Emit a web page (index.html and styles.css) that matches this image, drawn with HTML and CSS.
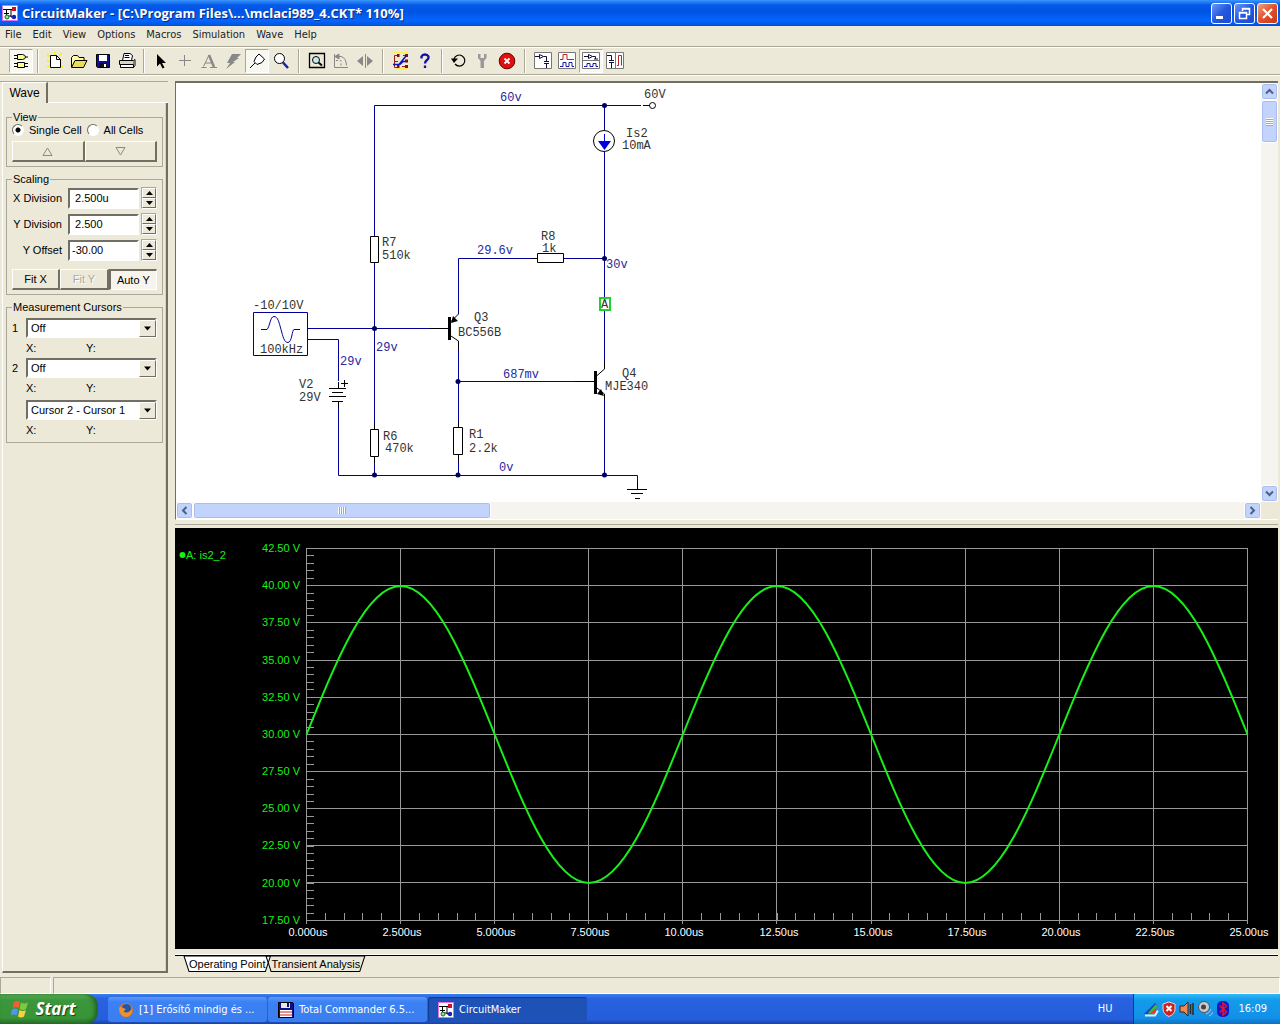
FILE: index.html
```html
<!DOCTYPE html>
<html lang="en">
<head>
<meta charset="utf-8">
<title>CircuitMaker</title>
<link rel="stylesheet" href="styles.css">
</head>
<body>
<svg class="defs" aria-hidden="true">
  <symbol id="app-icon" viewBox="0 0 16 16">
    <rect x=".5" y=".5" width="15" height="15" fill="#fff" stroke="#e070e8"/>
    <path d="M1 4.500h10M4.500 4v7h5M9 4v8h4M2 8.500h5" fill="none" stroke="#000"/>
    <rect x="10" y="2" width="4" height="4" fill="#d01020"/>
    <circle cx="12" cy="12" r="2.200" fill="#1020c0"/>
    <circle cx="5" cy="12" r="2" fill="#9fe0a0" stroke="#087018"/>
  </symbol>
</svg>

<header class="titlebar">
  <svg class="icon16"><use href="#app-icon"/></svg>
  <h1>CircuitMaker - [C:\Program Files\...\mclaci989_4.CKT* 110%]</h1>
  <div class="window-buttons">
    <button class="winbtn" aria-label="Minimize"><svg viewBox="0 0 19 19"><path d="M4 13.500h7" stroke="#fff" stroke-width="3"/></svg></button>
    <button class="winbtn" aria-label="Restore"><svg viewBox="0 0 19 19" fill="none" stroke="#fff"><path d="M7.500 7V4.500h7v6H12M7 5h8" stroke-width="1.500"/><path d="M4.500 8.500h7v6h-7zM4 9h8" stroke-width="1.500"/></svg></button>
    <button class="winbtn close" aria-label="Close"><svg viewBox="0 0 19 19"><path d="M5 5l9 9M14 5l-9 9" stroke="#fff" stroke-width="2.200"/></svg></button>
  </div>
</header>

<nav class="menubar">
  <a href="#">File</a><a href="#">Edit</a><a href="#">View</a><a href="#">Options</a><a href="#">Macros</a><a href="#">Simulation</a><a href="#">Wave</a><a href="#">Help</a>
</nav>

<div class="toolbar">
  <button class="tool pressed" aria-label="Parts browser"><svg viewBox="0 0 18 18" fill="#ffff90" stroke="#000"><path d="M5.500 2.500h5q3 .5 3 2.500t-3 2.500h-5zM2 3.500h3M2 6.500h3M13.500 5H16"/><path d="M5.500 10.500h7v5h-7zM2 11.500h3.500M2 14.500h3.500M12.500 11.500H16M12.500 14.500H16"/></svg></button>
  <span class="sep narrow"></span>
  <button class="tool" aria-label="New"><svg viewBox="0 0 18 18"><path d="M1 2l3 3M9 0v3M16 1l-3 3M1 15l3-2M17 15l-3-2M1 9h3" stroke="#f4f400" stroke-width="1.500"/><path d="M4.500 3.500h6l4 4v8h-10z" fill="#fff" stroke="#000"/><path d="M10.500 3.500v4h4" fill="none" stroke="#000"/></svg></button>
  <button class="tool" aria-label="Open"><svg viewBox="0 0 18 18" fill="#ffffa0" stroke="#000"><path d="M1.500 15V5.500l2-2h4l1.500 2h5v3"/><path d="M1.500 15.500l3.500-7h12l-3.500 7z" fill="#e8dc60"/></svg></button>
  <button class="tool" aria-label="Save"><svg viewBox="0 0 18 18"><path d="M2.500 2.500h13v13h-12l-1-1z" fill="#101090" stroke="#000"/><path d="M5 3h8v6H5z" fill="#fff"/><path d="M5 11h8v4H5z" fill="#111"/><path d="M10 12h2v3h-2z" fill="#fff"/></svg></button>
  <button class="tool" aria-label="Print"><svg viewBox="0 0 18 18" fill="#fff" stroke="#000"><path d="M4.500 8.500l1.500-7h6l2.500 2-1 5z"/><path d="M7 3.500h4M6.500 5.500h5"/><path d="M1.500 8.500h14v4h-14z" fill="#d8d4c0"/><path d="M2.500 12.500h13v3h-13zM15.500 8.500l1.500-1v6l-1.500 2"/></svg></button>
  <span class="sep narrow"></span>
  <button class="tool" aria-label="Select"><svg viewBox="0 0 18 18"><path d="M5 2v12.500l3-3 2.500 5 2-1-2.500-4.500h4z"/></svg></button>
  <button class="tool" aria-label="Wire"><svg viewBox="0 0 18 18"><path d="M3 8.500h12M8.500 3v11" stroke="#888"/></svg></button>
  <button class="tool" aria-label="Text"><svg viewBox="0 0 18 18" fill="none" stroke="#888"><path d="M3.500 14.500L9 3M5 11h6M1.500 15.500h5M10 15.500h7"/><path d="M9 3l5 12" stroke-width="2.500"/></svg></button>
  <button class="tool" aria-label="Delete"><svg viewBox="0 0 18 18"><path d="M8 2h9l-4 4h2L9 10h2l-9 7 4-6H3z" fill="#888"/></svg></button>
  <button class="tool pressed" aria-label="Probe"><svg viewBox="0 0 18 18" fill="#fff" stroke="#000"><path d="M8 5l3-3 5.500 5-2.500 3.500-5 2-3-3z"/><path d="M7 11l-5 5"/></svg></button>
  <button class="tool" aria-label="Zoom"><svg viewBox="0 0 18 18"><circle cx="7.500" cy="6.500" r="5" fill="#fff" stroke="#000"/><path d="M11 10.500l5 5.500" stroke="#1020b0" stroke-width="2.500"/></svg></button>
  <span class="sep"></span>
  <button class="tool" aria-label="Fit to window"><svg viewBox="0 0 18 18" fill="none" stroke="#000"><path d="M1.500 1.500h15v14h-15z" stroke-width="1.300"/><circle cx="8" cy="8" r="3.500" fill="#c0eeee"/><path d="M10.500 10.500l3.500 3" stroke-width="2"/></svg></button>
  <button class="tool" aria-label="Rotate"><svg viewBox="0 0 18 18" fill="none" stroke="#888"><path d="M2.500 2v13.500H16M5 4.500h4q5 1 5.500 9"/><path d="M7 2L3 4.500 7 7z" fill="#888"/><path d="M4 8.500h5v6" stroke-dasharray="2 2"/></svg></button>
  <button class="tool" aria-label="Mirror"><svg viewBox="0 0 18 18"><path d="M7 4v10L1 9zM11 4v10l6-5z" fill="#888"/><path d="M9.500 2v14" stroke="#888"/></svg></button>
  <span class="sep"></span>
  <button class="tool" aria-label="Analog or digital"><svg viewBox="0 0 18 18" fill="none"><path d="M2 .5h14M3 16.500h13" stroke="#ffef50" stroke-width="1.500"/><path d="M6 3.500H2.500v12H6M2.500 9.500H6M11 3.500h2M10 14.500h3" stroke="#a01818"/><path d="M5 2h2.500v3H5zM5 13h2.500v3H5zM13 2h3v3h-3zM13 7.500h3v3h-3zM13 13h3v3h-3z" fill="#801010"/><path d="M1 12.500h6L14 4M8 12.500l3-3h2" stroke="#1010c0" stroke-width="1.500"/></svg></button>
  <button class="tool" aria-label="Help"><svg viewBox="0 0 18 18" fill="none" stroke="#1010a8" stroke-width="2.300"><path d="M5.500 6.500V4.500q1-2 3.500-2t3.500 2q.5 2-1.500 3.500t-2 3.500M9 13.500v2.500"/></svg></button>
  <span class="sep narrow"></span>
  <button class="tool" aria-label="Reset"><svg viewBox="0 0 18 18"><path d="M4 7a5.500 5.500 0 1 1 1 5" fill="none" stroke="#000" stroke-width="1.200"/><path d="M1 6.500h7l-4 4.500z"/></svg></button>
  <button class="tool" aria-label="Step"><svg viewBox="0 0 18 18"><path d="M4 2v4l2.500 3v7h3.500V9l2.500-3V2L10 2v4H6.500V2z" fill="#999"/></svg></button>
  <button class="tool" aria-label="Stop"><svg viewBox="0 0 18 18"><circle cx="9" cy="9" r="7.800" fill="#e01010" stroke="#600"/><path d="M6.500 6.500l5 5M11.500 6.500l-5 5" stroke="#fff" stroke-width="1.800"/></svg></button>
  <span class="sep"></span>
  <button class="tool" aria-label="Schematic only"><svg viewBox="0 0 18 18" fill="none"><path d="M.5.5h17v16H.5z" fill="#fff" stroke="#777"/><path d="M1 4.500h4M5.500 2.500v4l4-2zM9.500 4.500h3v5M10 9.500h5M10 11.500h5M12.500 11.500V16" stroke="#10103a"/></svg></button>
  <button class="tool" aria-label="Waves only"><svg viewBox="0 0 18 18" fill="none"><path d="M.5.5h17v16H.5z" fill="#fff" stroke="#777"/><path d="M2 7.500h3v-5h4v5h7" stroke="#c02020"/><path d="M2 14.500h3v-4h3v4h3v-4h3v4h2" stroke="#1818a0"/></svg></button>
  <button class="tool pressed" aria-label="Split horizontally"><svg viewBox="0 0 18 18" fill="none"><path d="M.5.500h17v16H.5zM1 8.500h16" fill="#fff" stroke="#777"/><path d="M2 4.500h4M6.500 2.500v4l4-2zM10.500 4.500h3V7M12 7h4" stroke="#10103a"/><path d="M2 14.500h3v-3h3v3h3v-3h3v3h2" stroke="#1818a0"/></svg></button>
  <button class="tool" aria-label="Split vertically"><svg viewBox="0 0 18 18" fill="none"><path d="M.5.5h17v16H.5zM9.500 1v15" fill="#fff" stroke="#777"/><path d="M1 3.500h4.500v5M3 8.500h5M3 10.500h5M5.500 10.500V16" stroke="#10103a"/><path d="M11 13.500h1.500v-10h3v10" stroke="#c02020"/></svg></button>
</div>

<main class="workspace">
  <aside class="sidebar">
    <div class="side-tabs"><button class="side-tab">Wave</button></div>
    <form class="side-page">
      <fieldset>
        <legend>View</legend>
        <div class="radios">
          <input type="radio" id="single" name="cell" checked><label for="single">Single Cell</label>
          <input type="radio" id="all" name="cell"><label for="all">All Cells</label>
        </div>
        <div class="button-row">
          <button type="button" class="btn" aria-label="Previous"><svg width="11" height="9"><path d="M5.500 1L10 8.500H1z" fill="none" stroke="#8c8a7c"/></svg></button>
          <button type="button" class="btn" aria-label="Next"><svg width="11" height="9"><path d="M5.500 8L10 .5H1z" fill="none" stroke="#8c8a7c"/></svg></button>
        </div>
      </fieldset>
      <fieldset>
        <legend>Scaling</legend>
        <div class="field"><label for="xdiv">X Division</label><input type="text" id="xdiv" value=" 2.500u">
          <span class="spin"><button type="button" aria-label="X up"><svg viewBox="0 0 7 4"><path d="M0 4l3.500-4L7 4z"/></svg></button><button type="button" aria-label="X down"><svg viewBox="0 0 7 4"><path d="M0 0l3.500 4L7 0z"/></svg></button></span></div>
        <div class="field"><label for="ydiv">Y Division</label><input type="text" id="ydiv" value=" 2.500">
          <span class="spin"><button type="button" aria-label="Y up"><svg viewBox="0 0 7 4"><path d="M0 4l3.500-4L7 4z"/></svg></button><button type="button" aria-label="Y down"><svg viewBox="0 0 7 4"><path d="M0 0l3.500 4L7 0z"/></svg></button></span></div>
        <div class="field"><label for="yoff">Y Offset</label><input type="text" id="yoff" value="-30.00">
          <span class="spin"><button type="button" aria-label="Offset up"><svg viewBox="0 0 7 4"><path d="M0 4l3.500-4L7 4z"/></svg></button><button type="button" aria-label="Offset down"><svg viewBox="0 0 7 4"><path d="M0 0l3.500 4L7 0z"/></svg></button></span></div>
        <div class="button-row">
          <button type="button" class="btn">Fit X</button><button type="button" class="btn" disabled>Fit Y</button><button type="button" class="btn down">Auto Y</button>
        </div>
      </fieldset>
      <fieldset class="cursors">
        <legend>Measurement Cursors</legend>
        <label for="c1">1</label>
        <span class="combo"><select id="c1"><option>Off</option></select><svg viewBox="0 0 7 4"><path d="M0 0h7L3.500 4z"/></svg></span>
        <div class="readout"><span>X:</span><span>Y:</span></div>
        <label for="c2">2</label>
        <span class="combo"><select id="c2"><option>Off</option></select><svg viewBox="0 0 7 4"><path d="M0 0h7L3.500 4z"/></svg></span>
        <div class="readout"><span>X:</span><span>Y:</span></div>
        <span class="combo alone"><select aria-label="Difference"><option>Cursor 2 - Cursor 1</option></select><svg viewBox="0 0 7 4"><path d="M0 0h7L3.500 4z"/></svg></span>
        <div class="readout"><span>X:</span><span>Y:</span></div>
      </fieldset>
    </form>
  </aside>

  <section class="views">
    <div class="schematic">
      <div class="canvas">
        <svg width="1085" height="419" viewBox="176 83 1085 419">
          <g class="wire">
            <path d="M374.500 236V105.500H641M604.500 105V130M604.500 152V297M604.500 311V361M564 258.500H604M531 258.500H458.500V314M307 328.500H430M307 339.500H338.500V381M374.500 263V423M374.500 463V475M338.500 408V475.500H637.500V482M458.500 349V421M458.500 461V475M458 381.500H575M604.500 400V475"/>
            <path d="M253.500 312.500h54v43h-54zM261 329.500h6c3-3 3-13 7-13s5 6 7 13 3 13 7 13 4-13 6-13h6"/>
          </g>
          <g class="part">
            <path d="M643 105.500h7M531 258.500h7M430 328.500h18M575 381.500h19M374.500 423v6M374.500 457v6M458.500 421v6M458.500 455v6M637.500 482v7M627 489.500h20M631 493.500h12M635 498.500h5"/>
            <path d="M370.500 236.500h8v26h-8zM370.500 429.500h8v27h-8zM453.500 427.500h9v27h-9zM537.500 253.500h26v9h-26z"/>
            <path d="M338.500 382v6M329 388.500h17M332 392.500h11M329 396.500h17M332 401.500h11M338.500 402v6M341 383.500h7M344.500 380v7"/>
            <path d="M458.500 314l-8 8M451 336l7.500 5v8M604.500 361v8l-8 7M597 388l7.500 6v6"/>
            <circle cx="652.500" cy="105.500" r="3"/>
            <circle cx="604" cy="141" r="10.500"/>
          </g>
          <path d="M448 317h3v23h-3zM594 371h3v23h-3zM451 323l2-7 5 5zM604 396l-7-2 4-5z"/>
          <path d="M604.500 134v8" stroke="#0000e0"/><path d="M598 141h13l-6.500 9z" fill="#0000e0"/>
          <g fill="#000060"><circle cx="604.500" cy="105.500" r="2.500"/><circle cx="604.500" cy="258.500" r="2.500"/><circle cx="374.500" cy="328.500" r="2.500"/><circle cx="458" cy="381.500" r="2.500"/><circle cx="374.500" cy="475" r="2.500"/><circle cx="458" cy="475" r="2.500"/><circle cx="604.500" cy="475" r="2.500"/></g>
          <rect x="600" y="298" width="10" height="12" fill="#fff" stroke="#20d030" stroke-width="2"/>
          <g class="name">
            <text x="644" y="98">60V</text><text x="626" y="137">Is2</text><text x="622" y="149">10mA</text>
            <text x="382" y="246">R7</text><text x="382" y="259">510k</text><text x="541" y="240">R8</text><text x="542" y="252">1k</text>
            <text x="253" y="309">-10/10V</text><text x="260" y="353">100kHz</text>
            <text x="474" y="321">Q3</text><text x="458" y="336">BC556B</text><text x="622" y="377">Q4</text><text x="605" y="390">MJE340</text>
            <text x="299" y="388">V2</text><text x="299" y="401">29V</text><text x="383" y="440">R6</text><text x="385" y="452">470k</text>
            <text x="469" y="438">R1</text><text x="469" y="452">2.2k</text><text x="601" y="308">A</text>
          </g>
          <g class="volt">
            <text x="500" y="101">60v</text><text x="477" y="254">29.6v</text><text x="606" y="268">30v</text><text x="376" y="351">29v</text>
            <text x="340" y="365">29v</text><text x="503" y="378">687mv</text><text x="499" y="471">0v</text>
          </g>
        </svg>
      </div>
      <div class="vscroll">
        <button class="sb" aria-label="Scroll up"><svg viewBox="0 0 9 6"><path d="M1 5l3.500-3.500L8 5"/></svg></button>
        <div class="thumb"></div>
        <button class="sb" aria-label="Scroll down"><svg viewBox="0 0 9 6"><path d="M1 1l3.500 3.500L8 1"/></svg></button>
      </div>
      <div class="hscroll">
        <button class="sb" aria-label="Scroll left"><svg viewBox="0 0 6 9"><path d="M5 1L1.500 4.500 5 8"/></svg></button>
        <div class="thumb"></div>
        <button class="sb" aria-label="Scroll right"><svg viewBox="0 0 6 9"><path d="M1 1l3.500 3.500L1 8"/></svg></button>
      </div>
    </div>

    <div class="scope">
      <svg viewBox="176 528 1102 421">
        <path class="grid" d="M306 548.500h942M306 585.500h942M306 622.500h942M306 660.500h942M306 697.500h942M306 734.500h942M306 771.500h942M306 808.500h942M306 845.500h942M306 882.500h942M306 920.500h942M306.500 548v376M400.500 548v376M494.500 548v376M588.500 548v376M682.500 548v376M776.500 548v376M871.500 548v376M965.500 548v376M1059.500 548v376M1153.500 548v376M1247.500 548v376"/>
        <path class="ticks-x" d="M306 916.500h942"/>
        <path class="ticks-y" d="M310 548v372"/>
        <path class="trace" d="M306.500 734.500c30.700-76.100 60-148.500 94.100-148.500s63.400 72.400 94.100 148.500 60 148.500 94.100 148.500 63.400-72.400 94.100-148.500 60-148.500 94.100-148.500 63.400 72.400 94.100 148.500 60 148.500 94.100 148.500 63.400-72.400 94.100-148.500 60-148.500 94.100-148.500 63.400 72.400 94.100 148.500"/>
        <circle cx="182.500" cy="555" r="3" fill="#18f018"/>
        <text class="green" x="186" y="559">A: is2_2</text>
        <g class="green end">
          <text x="300" y="552">42.50 V</text><text x="300" y="589">40.00 V</text><text x="300" y="626">37.50 V</text><text x="300" y="664">35.00 V</text><text x="300" y="701">32.50 V</text><text x="300" y="738">30.00 V</text><text x="300" y="775">27.50 V</text><text x="300" y="812">25.00 V</text><text x="300" y="849">22.50 V</text><text x="300" y="887">20.00 V</text><text x="300" y="924">17.50 V</text>
        </g>
        <g class="white mid">
          <text x="308" y="936">0.000us</text><text x="402" y="936">2.500us</text><text x="496" y="936">5.000us</text><text x="590" y="936">7.500us</text><text x="684" y="936">10.00us</text><text x="779" y="936">12.50us</text><text x="873" y="936">15.00us</text><text x="967" y="936">17.50us</text><text x="1061" y="936">20.00us</text><text x="1155" y="936">22.50us</text><text x="1249" y="936">25.00us</text>
        </g>
      </svg>
    </div>

    <div class="wave-tabs">
      <button class="wave-tab current"><svg viewBox="0 0 86 16" preserveAspectRatio="none"><path d="M0 0l5 15.500h76L86 0z"/></svg><span>Operating Point</span></button>
      <button class="wave-tab"><svg viewBox="0 0 97 16" preserveAspectRatio="none"><path d="M0 0l5 15.500h87L97 0z"/></svg><span>Transient Analysis</span></button>
    </div>
  </section>
</main>

<div class="statusbar"><span></span><span></span></div>

<footer class="taskbar">
  <button class="start"><svg viewBox="0 0 20 20"><path d="M4 3q3-2 6 0L8.500 9q-3-2-6 0z" fill="#f06030"/><path d="M11 3.500q3 2 7 0L16 10q-3 2-6.500 0z" fill="#80c840"/><path d="M2 10.500q3-2 6 0L6.500 16.500q-3-2-6 0z" fill="#5a90f0"/><path d="M9.500 11q3 2 6.500 0l-2 6.500q-3 2-6 0z" fill="#f8d040"/></svg>Start</button>
  <button class="task"><svg class="icon16" viewBox="0 0 16 16"><circle cx="8" cy="8" r="7" fill="#e8701c"/><circle cx="8.500" cy="6.500" r="4.600" fill="#1c58b0"/><path d="M1 6q2-2 4 0l3 1q-2 1-2 3 4 2 8-3 0 8-6 8T1 6z" fill="#f09028"/></svg><span>[1] Erősítő mindig és ...</span></button>
  <button class="task"><svg class="icon16" viewBox="0 0 16 16"><path d="M.5.5h14l1 1v14H.5z" fill="#101080" stroke="#000"/><path d="M3 1h9v5H3z" fill="#e8e8f0"/><path d="M9 1h2v4H9z" fill="#101080"/><path d="M2 8h12v7H2z" fill="#fff"/><path d="M2 10h12M2 13h12" stroke="#c02020"/></svg><span>Total Commander 6.5...</span></button>
  <button class="task active"><svg class="icon16"><use href="#app-icon"/></svg><span>CircuitMaker</span></button>
  <span class="lang">HU</span>
  <div class="tray">
    <svg viewBox="0 0 16 16"><path d="M1 13L12 2l2 2-9 9z" fill="#2040c0"/><path d="M5 12l8-9 1 3-6 6z" fill="#30c040"/><path d="M2 14.500h10l3-5" fill="none" stroke="#e8e8e8" stroke-width="2"/><path d="M7 12l7-5-2 5z" fill="#e04020"/></svg>
    <svg viewBox="0 0 16 16"><path d="M8 1l6 2v5q0 5-6 7.500Q2 13 2 8V3z" fill="#d02020" stroke="#f0d0d0"/><path d="M5.500 5l5 5M10.500 5l-5 5" stroke="#fff" stroke-width="2"/></svg>
    <svg viewBox="0 0 16 16"><path d="M1 5h4l4-4v14l-4-4H1z" fill="#f08850" stroke="#402010"/><path d="M11.500 3v10M14 2v12" stroke="#302820" stroke-width="1.500"/></svg>
    <svg viewBox="0 0 16 16"><circle cx="7" cy="6" r="5.500" fill="#c8ccd0" stroke="#555"/><circle cx="6.500" cy="6" r="2.500" fill="#444"/><path d="M9 13q4-1 5-5M12 15q3-1 4-4" fill="none" stroke="#a0c8f0"/></svg>
    <svg viewBox="0 0 16 16"><rect x="2" width="12" height="16" rx="5" fill="#1018c8"/><path d="M4.500 4.500l7 6.500L8 14V2l3.500 3-7 6.500" fill="none" stroke="#e01830" stroke-width="1.500"/></svg>
    <time>16:09</time>
  </div>
</footer>
</body>
</html>
```
FILE: styles.css
```css
:root {
  --face: #ece9d8;
  --shade: #aca899;
  --dark: #716f64;
  --ui: "DejaVu Sans Condensed", "DejaVu Sans", sans-serif;
  --small: "Liberation Sans", Arial, sans-serif;
}

* { box-sizing: border-box; }

body {
  display: flex;
  flex-direction: column;
  min-height: 100vh;
  margin: 0;
  background: var(--face);
  color: #000;
  font: 11px/14px var(--small);
}

button, input, select { margin: 0; padding: 0; border: 0; font: inherit; color: inherit; }
button { display: flex; align-items: center; justify-content: center; background: none; }
.defs { position: absolute; width: 0; height: 0; }
.icon16 { flex: none; width: 16px; height: 16px; }

/* Title bar */
.titlebar {
  display: flex;
  align-items: center;
  gap: 4px;
  height: 26px;
  padding: 0 2px;
  background: linear-gradient(#3b96fd, #0558e8 20%, #0054e3 45%, #0466fd 80%, #0050d8);
}
.titlebar h1 {
  flex: 1;
  margin: 0;
  color: #fff;
  font: bold 13px/20px "Open Sans", "Noto Sans", sans-serif;
  text-shadow: 1px 1px #0a2a80;
}
.window-buttons { display: flex; gap: 2px; }
.winbtn {
  width: 21px;
  height: 21px;
  border: 1px solid #fff;
  border-radius: 3px;
  background: linear-gradient(135deg, #6c98f4, #2458e0 50%, #1c4ad0);
}
.winbtn.close { background: linear-gradient(135deg, #f0a080, #e0502c 50%, #c43c14); }
.winbtn svg { width: 19px; height: 19px; }

/* Menu */
.menubar {
  display: flex;
  gap: 11px;
  height: 20px;
  padding: 0 5px;
  font: 11px/18px var(--ui);
}
.menubar a { color: #222; text-decoration: none; }

/* Toolbar */
.toolbar {
  display: flex;
  align-items: center;
  height: 29px;
  margin-bottom: 6px;
  padding: 0 9px;
  border-top: 1px solid var(--shade);
  border-bottom: 1px solid var(--shade);
  box-shadow: inset 0 1px #fff, 0 1px #fff;
}
.tool { width: 24px; height: 24px; }
.tool svg { flex: none; width: 18px; height: 18px; }
.tool.pressed { background: #f8f7f0; border: 1px solid; border-color: var(--shade) #fff #fff var(--shade); }
.sep { flex: none; width: 12px; height: 24px; background: linear-gradient(90deg, var(--shade) 1px, #fff 1px) no-repeat center / 2px 100%; }
.sep.narrow { width: 10px; }

/* Workspace */
.workspace { display: flex; flex: 1; gap: 7px; padding: 0 2px 4px 0; }
.sidebar {
  flex: none;
  display: flex;
  flex-direction: column;
  width: 168px;
  padding-left: 2px;
  border-top: 1px solid var(--shade);
}
.side-tabs { display: flex; height: 21px; }
.side-tabs::after { content: ""; flex: 1; border-bottom: 1px solid #fff; }
.side-tab {
  width: 46px;
  border: solid;
  border-width: 1px 2px 0 1px;
  border-color: #fff var(--dark) #fff #fff;
  font-size: 12px;
}
.side-page {
  flex: 1;
  padding: 8px 3px 0 3px;
  border: solid;
  border-width: 0 2px 2px 1px;
  border-color: #fff var(--dark) var(--dark) #fff;
  box-shadow: inset -1px 0 #d8d4c4;
}
fieldset {
  min-width: 0;
  margin: 0 0 6px;
  padding: 0 5px 4px;
  border: 1px solid var(--shade);
}
legend { padding: 0 1px; line-height: 12px; }
.radios { display: flex; align-items: center; height: 14px; margin-bottom: 4px; }
.radios label { margin: 0 5px; white-space: nowrap; }
.radios input {
  appearance: none;
  flex: none;
  width: 12px;
  height: 12px;
  border: 1px solid;
  border-color: var(--dark) #fff #fff var(--dark);
  border-radius: 50%;
  background: #fff;
}
.radios input:checked { background: radial-gradient(circle, #000 2px, #fff 3px); }
.button-row { display: flex; }
.btn {
  flex: 1;
  height: 21px;
  border: solid;
  border-width: 1px 2px 2px 1px;
  border-color: #fff var(--dark) var(--dark) #fff;
}
.btn:disabled { color: var(--shade); text-shadow: 1px 1px #fff; }
.btn.down { border-width: 2px 1px 1px 2px; border-color: var(--dark) #fff #fff var(--dark); background: #f6f4ec; }
.field { display: flex; align-items: center; justify-content: flex-end; height: 22px; margin: 2px 0 4px; }
.field + .field { margin-top: 4px; }
.field + .button-row { margin-top: 8px; }
.field label { margin-right: 6px; white-space: nowrap; }
.field input {
  width: 71px;
  height: 21px;
  padding-left: 2px;
  border: 2px solid;
  border-color: var(--dark) #fff #fff var(--dark);
  background: #fff;
  white-space: pre;
}
.spin { display: flex; flex-direction: column; margin-left: 2px; border: 1px solid; border-color: var(--shade) #fff #fff var(--shade); }
.spin button { width: 14px; height: 10px; border: 1px solid; border-color: #fff var(--dark) var(--dark) #fff; }
.spin svg { width: 7px; height: 4px; }
.cursors { display: grid; grid-template-columns: 14px 1fr; align-items: center; padding: 5px 5px 2px; }
.combo { position: relative; grid-column: 2; }
.combo.alone { margin-top: 2px; }
.combo select {
  appearance: none;
  display: block;
  width: 100%;
  height: 20px;
  padding-left: 3px;
  border: 2px solid;
  border-color: var(--dark) #fff #fff var(--dark);
  background: #fff;
}
.combo svg {
  position: absolute;
  top: 2px;
  right: 1px;
  width: 17px;
  height: 17px;
  padding: 5px 4px;
  border: 1px solid;
  border-color: #fff var(--dark) var(--dark) #fff;
  background: var(--face);
  pointer-events: none;
}
.readout { grid-column: 2; display: grid; grid-template-columns: 60px 1fr; height: 20px; line-height: 20px; }

/* Schematic and waveform views */
.views { flex: 1; display: flex; flex-direction: column; min-width: 0; }
.schematic {
  flex: 1;
  display: grid;
  grid-template: 1fr 17px / minmax(0, 1fr) 17px;
  border: solid;
  border-width: 2px 0 1px 1px;
  border-color: var(--dark) #fff #fff var(--dark);
}
.canvas { overflow: hidden; background: #fff; }
.canvas svg { display: block; }
.wire path { fill: none; stroke: #000096; }
.part path, .part circle { fill: none; stroke: #000; }
.name, .volt { font: 12px "Liberation Mono", "Courier New", monospace; }
.name { fill: #333; }
.volt { fill: #2828a0; }
.vscroll, .hscroll { display: flex; background: #f5f4ee; }
.vscroll { flex-direction: column; }
.hscroll { grid-column: 1; }
.sb, .thumb { border: 1px solid #fff; border-radius: 3px; background: #c2d3fc; box-shadow: inset 0 0 0 1px #a9bdf0; }
.sb { flex: none; width: 17px; height: 17px; }
.sb svg { width: 9px; height: 9px; fill: none; stroke: #4d6185; stroke-width: 2; }
.vscroll .thumb { height: 43px; background: repeating-linear-gradient(#fff 0 1px, #8ca8e8 1px 2px) no-repeat center / 7px 8px, #c2d3fc; }
.hscroll .thumb { width: 298px; background: repeating-linear-gradient(90deg, #fff 0 1px, #8ca8e8 1px 2px) no-repeat center / 8px 7px, #c2d3fc; }
.thumb + .sb { margin-top: auto; }
.hscroll .thumb + .sb { margin: 0 0 0 auto; }

.scope { margin-top: 4px; padding-top: 3px; border-top: 1px solid var(--shade); }
.scope svg { display: block; width: 100%; padding-left: 1px; background: #000; font: 11px var(--small); }
.grid, .ticks-x, .ticks-y { fill: none; stroke: #989898; shape-rendering: crispEdges; }
.ticks-x { stroke-width: 7; stroke-dasharray: 1 17.820; }
.ticks-y { stroke-width: 7; stroke-dasharray: 1 6.440; }
.trace { fill: none; stroke: #18f018; stroke-width: 2; }
.green { fill: #18f018; }
.white { fill: #fff; }
.end { text-anchor: end; }
.mid { text-anchor: middle; }

.wave-tabs {
  display: flex;
  height: 18px;
  margin-top: 6px;
  padding-left: 9px;
  border-top: 1px solid #000;
  box-shadow: 0 -1px #fff;
}
.wave-tab { position: relative; height: 16px; padding: 0 5px; white-space: nowrap; }
.wave-tab + .wave-tab { margin-left: -4px; }
.wave-tab svg { position: absolute; inset: 0; width: 100%; height: 100%; fill: none; stroke: #000; overflow: visible; }
.wave-tab.current svg { fill: #fff; }
.wave-tab span { position: relative; }

/* Status bar and taskbar */
.statusbar { display: flex; gap: 2px; height: 17px; }
.statusbar span { width: 51px; border: 1px solid; border-color: var(--shade) #fff #fff var(--shade); }
.statusbar span + span { flex: 1; }
.taskbar {
  display: flex;
  align-items: stretch;
  height: 30px;
  color: #fff;
  background: linear-gradient(#3a80ee, #2862e0 15%, #245edb 85%, #1941a5);
  font: 11px/14px var(--ui);
}
.start {
  gap: 5px;
  width: 98px;
  margin-right: 10px;
  padding-right: 12px;
  border-radius: 0 12px 12px 0;
  background: linear-gradient(#5cb85c, #3c963c 20%, #389438 80%, #2a702a);
  box-shadow: inset -3px 0 4px #246024;
  font: italic bold 17px/20px "Open Sans", sans-serif;
  text-shadow: 1px 1px 1px #144014;
}
.start svg { width: 20px; height: 20px; }
.task {
  justify-content: flex-start;
  gap: 5px;
  width: 159px;
  height: 25px;
  margin: 3px 1px 0 0;
  padding: 0 10px;
  border-radius: 3px;
  background: linear-gradient(#5a98fa, #3c81f3 20%, #3a7ef0);
  white-space: nowrap;
}
.task.active { background: #1e52b7; box-shadow: inset 1px 1px 1px #143c90; }
.lang { margin-left: auto; padding: 8px 21px; }
.tray {
  display: flex;
  align-items: center;
  gap: 2px;
  padding: 0 13px 0 9px;
  border-left: 1px solid #0a3c8c;
  background: linear-gradient(#30b8f8, #129ceb 20%, #1290e8 80%, #0d70c0);
}
.tray svg { width: 16px; height: 16px; }
.tray time { margin-left: 5px; }
```
